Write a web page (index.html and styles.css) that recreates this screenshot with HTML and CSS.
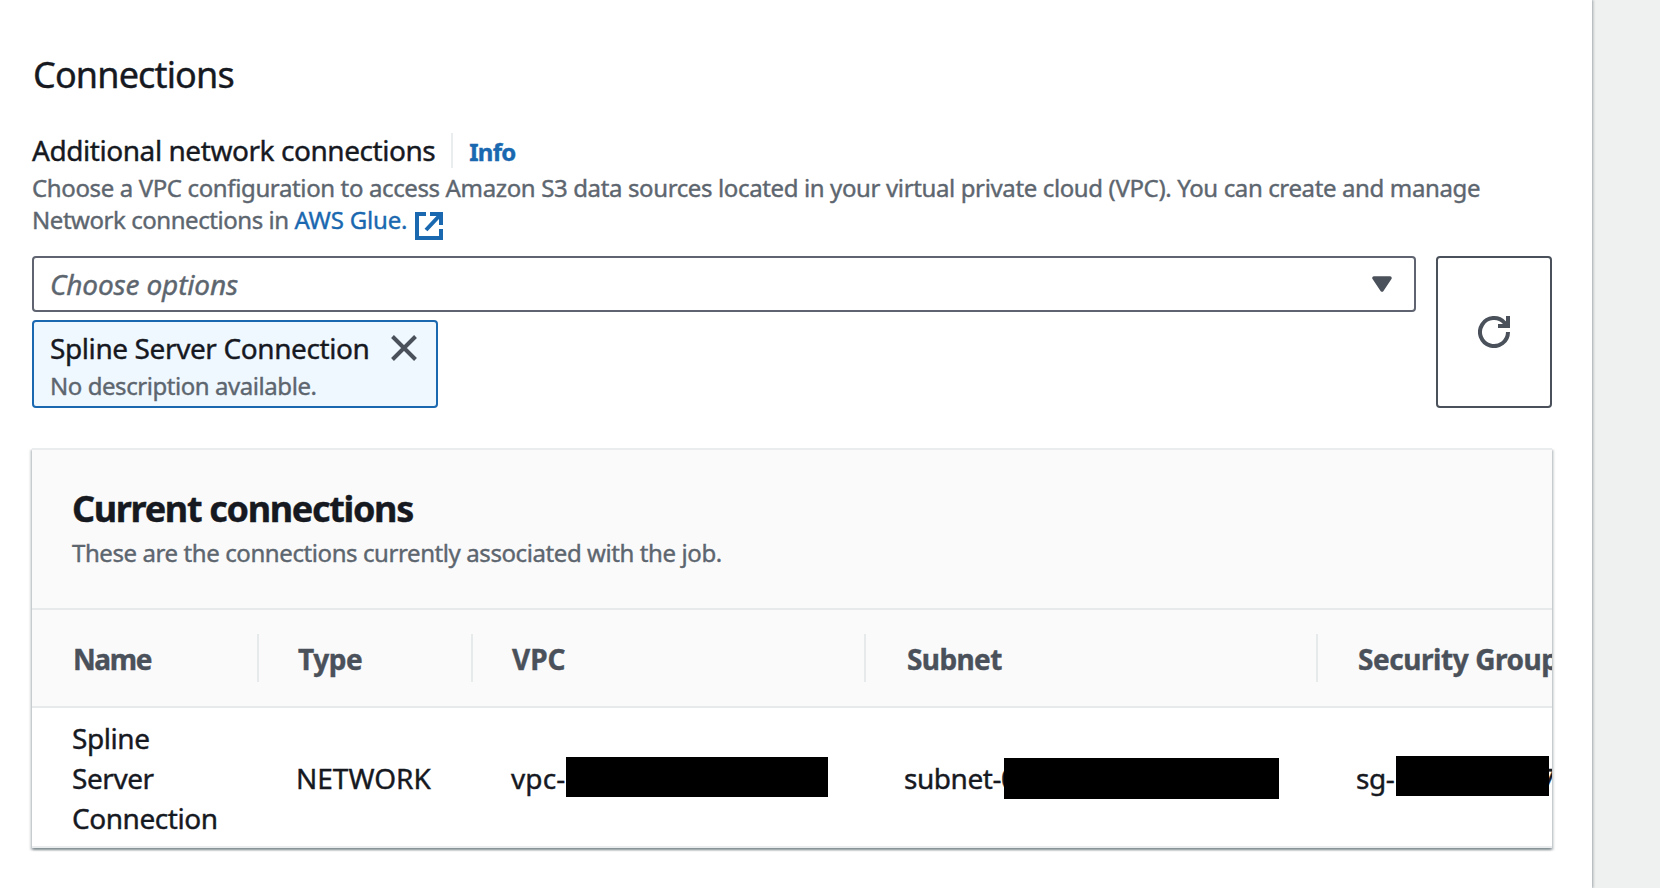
FILE: index.html
```html
<!DOCTYPE html>
<html lang="en">
<head>
<meta charset="utf-8">
<title>Connections</title>
<link rel="stylesheet" href="styles.css">
</head>
<body>
<main class="panel">
  <h2 class="panel-title">Connections</h2>
  <div class="label-row">
    <span class="label">Additional network connections</span>
    <a class="info">Info</a>
  </div>
  <p class="hint">Choose a VPC configuration to access Amazon S3 data sources located in your virtual private cloud (VPC). You can create and manage<br><span class="hint-end">Network connections in <a class="link">AWS Glue.</a><svg class="external" viewBox="0 0 28 28"><path d="M11 2H2v24h24v-9M15 2h11v11M26 2 11 18" fill="none" stroke="currentColor" stroke-width="4"/></svg></span></p>
  <div class="form-row">
    <div class="field">
      <div class="select">
        <span class="placeholder">Choose options</span>
        <svg class="caret" viewBox="0 0 20 16"><path d="M2 2h16l-8 12z" fill="currentColor" stroke="currentColor" stroke-width="3.5" stroke-linejoin="round"/></svg>
      </div>
      <div class="token">
        <div>
          <div class="token-label">Spline Server Connection</div>
          <div class="token-desc">No description available.</div>
        </div>
        <svg class="close" viewBox="0 0 26 26"><path d="M1.5 1.5l23 23M24.5 1.5l-23 23" fill="none" stroke="currentColor" stroke-width="4"/></svg>
      </div>
    </div>
    <button class="refresh" aria-label="Refresh">
      <svg class="refresh-icon" viewBox="0 0 32 32"><path d="M30 16A14 14 0 1 1 26.5 6.8L30 10M30 0v10H20" fill="none" stroke="currentColor" stroke-width="4"/></svg>
    </button>
  </div>
  <section class="container">
    <header class="container-header">
      <h3 class="container-title">Current connections</h3>
      <p class="container-desc">These are the connections currently associated with the job.</p>
    </header>
    <div class="row head">
      <div class="cell name">Name</div>
      <div class="cell type">Type</div>
      <div class="cell vpc">VPC</div>
      <div class="cell subnet">Subnet</div>
      <div class="cell group">Security Groups</div>
    </div>
    <div class="row body">
      <div class="cell">Spline<br>Server<br>Connection</div>
      <div class="cell network">NETWORK</div>
      <div class="cell vpc-id">vpc-<i class="mask mask-vpc"></i></div>
      <div class="cell subnet-id">subnet-0<i class="mask mask-subnet"></i></div>
      <div class="cell group-id">sg-<span class="tail">7</span><i class="mask mask-sg"></i></div>
    </div>
  </section>
</main>
</body>
</html>
```
FILE: styles.css
```css
* { box-sizing: border-box; }
body {
  margin: 0;
  height: 888px;
  overflow: hidden;
  background: #eff0f0;
  color: #16191f;
  font: 400 28px/40px "Noto Sans", "Open Sans", sans-serif;
  letter-spacing: -0.44px;
  -webkit-text-stroke: 0.4px currentColor;
}
h2, h3, p { margin: 0; }
.panel {
  width: 1592px;
  height: 888px;
  padding: 53px 40px 0 32px;
  background: #fff;
  box-shadow: 2px 0 2px 0 rgba(0, 28, 36, .15), 0 0 2px 0 rgba(0, 28, 36, .3);
}
.panel-title { font-size: 36px; line-height: 44px; font-weight: 400; letter-spacing: -0.85px; text-indent: 1px; }
.label-row { display: flex; align-items: center; margin-top: 33px; height: 40px; }
.info {
  height: 35px;
  margin-left: 16px;
  padding-left: 16px;
  border-left: 2px solid #eaeded;
  color: #1a68b0;
  font-size: 24px;
  font-weight: 700;
  line-height: 37px;
  letter-spacing: -0.8px;
}
.hint {
  margin-top: 2px;
  height: 64px;
  color: #5d666f;
  font-size: 24px;
  line-height: 32px;
  letter-spacing: -0.37px;
  white-space: nowrap;
}
.hint-end { display: flex; white-space: pre; letter-spacing: -0.45px; }
.link { color: #1a68b0; letter-spacing: -0.2px; }
.external { width: 28px; height: 28px; margin: 8px 0 0 8px; color: #1a68b0; }
.form-row { display: flex; gap: 20px; margin-top: 20px; height: 152px; }
.field { width: 1384px; display: flex; flex-direction: column; gap: 8px; }
.select {
  display: flex;
  align-items: center;
  justify-content: space-between;
  height: 56px;
  padding: 0 22px 0 16px;
  border: 2px solid #5f6470;
  border-radius: 4px;
}
.placeholder { color: #5d666f; font-style: italic; letter-spacing: -0.15px; }
.caret { width: 20px; height: 16px; color: #4a515a; }
.token {
  display: flex;
  justify-content: space-between;
  width: 406px;
  height: 88px;
  padding: 6px 19px 0 16px;
  border: 2px solid #1a68b0;
  border-radius: 4px;
  background: #f0f8ff;
}
.token-label { letter-spacing: -0.4px; }
.token-desc { margin-top: 2px; color: #5d666f; font-size: 24px; line-height: 32px; }
.close { width: 26px; height: 26px; margin-top: 7px; color: #4a515a; }
.refresh {
  display: flex;
  align-items: center;
  justify-content: center;
  width: 116px;
  padding: 0;
  border: 2px solid #4a515a;
  border-radius: 4px;
  background: #fff;
  color: #4a515a;
}
.refresh-icon { width: 32px; height: 32px; }
.container {
  margin-top: 40px;
  height: 400px;
  width: 1520px;
  overflow: hidden;
  border-top: 2px solid #eaeded;
  background: #fff;
  box-shadow: 0 2px 2px 0 rgba(0, 28, 36, .3), 2px 2px 2px 0 rgba(0, 28, 36, .15), -2px 2px 2px 0 rgba(0, 28, 36, .15);
}
.container-header {
  height: 160px;
  padding: 37px 40px 0;
  border-bottom: 2px solid #e7eaea;
  background: #fafafa;
}
.container-title { font-size: 36px; line-height: 44px; font-weight: 700; letter-spacing: -1.33px; }
.container-desc { margin-top: 6px; color: #5d666f; font-size: 24px; line-height: 32px; letter-spacing: -0.41px; }
.row { display: grid; grid-template-columns: 227px 214px 393px 452px 340px; }
.cell { position: relative; white-space: nowrap; }
.head {
  height: 98px;
  padding: 24px 0;
  border-bottom: 2px solid #e7eaea;
  background: #fafafa;
  color: #4a515a;
  font-weight: 700;
}
.head .cell { height: 48px; padding: 5px 0 0 39px; border-right: 2px solid #e7eaea; }
.head .name { padding-left: 41px; letter-spacing: -1.4px; }
.head .vpc { letter-spacing: 0; }
.head .subnet { padding-left: 41px; letter-spacing: -0.6px; }
.head .group { padding-left: 40px; }
.body { height: 140px; align-items: center; border-bottom: 2px solid #eaeded; }
.body .cell { display: flex; align-items: center; height: 138px; padding: 2px 0 0 37px; }
.body .cell:first-child { padding-left: 40px; }
.body .network { letter-spacing: 0; }
.body .vpc-id { padding-left: 38px; letter-spacing: 0.1px; }
.body .subnet-id, .body .group-id { padding-left: 38px; }
.tail { margin-left: 146px; }
.mask { position: absolute; background: #000; }
.mask-vpc { left: 93px; top: 49px; width: 262px; height: 40px; }
.mask-subnet { left: 138px; top: 50px; width: 275px; height: 41px; }
.mask-sg { left: 78px; top: 48px; width: 153px; height: 40px; }
```
